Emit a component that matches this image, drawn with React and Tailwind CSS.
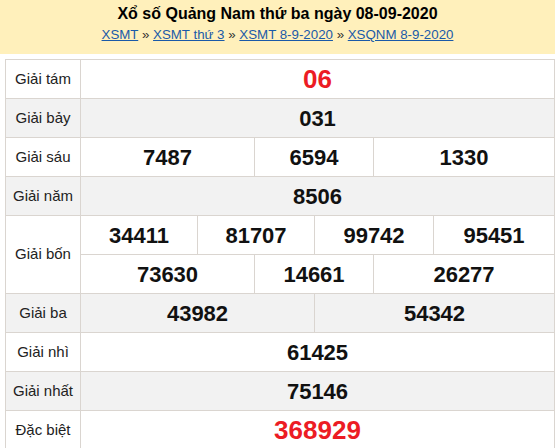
import React from "react";

const B = "border-[#dad5d0]";

function Cell({ w, children, red }) {
  return (
    <div
      className={`h-[39px] border-r border-b ${B} flex items-center justify-center font-bold ${
        red ? "text-[#ec1c24] text-[26px]" : "text-[#111] text-[22px]"
      }`}
      style={{ width: w }}
    >
      {children}
    </div>
  );
}

function Label({ children, h = 39 }) {
  return (
    <div
      className={`w-[75px] shrink-0 border-r border-b ${B} flex items-center justify-center text-[15px] text-[#222]`}
      style={{ height: h }}
    >
      {children}
    </div>
  );
}

function Row({ label, bg, cells }) {
  return (
    <div className={`flex ${bg ? "bg-[#f2f2f2]" : "bg-white"}`}>
      <Label>{label}</Label>
      {cells.map((c, i) => (
        <Cell key={i} w={c[1]} red={c[2]}>
          {c[0]}
        </Cell>
      ))}
    </div>
  );
}

export default function App() {
  return (
    <div
      className="w-[555px] h-[448px] overflow-hidden bg-white"
      style={{ fontFamily: '"Liberation Sans", Arial, sans-serif' }}
    >
      <div className="bg-[#fff0bb] h-[54px] text-center pt-[4px]">
        <div className="text-[16px] font-bold leading-[20px] text-black">
          Xổ số Quảng Nam thứ ba ngày 08-09-2020
        </div>
        <div className="text-[13.3px] leading-[18px] mt-[2px] text-[#333]">
          <a className="text-[#1a5aa8] underline" href="#">XSMT</a>
          {" » "}
          <a className="text-[#1a5aa8] underline" href="#">XSMT thứ 3</a>
          {" » "}
          <a className="text-[#1a5aa8] underline" href="#">XSMT 8-9-2020</a>
          {" » "}
          <a className="text-[#1a5aa8] underline" href="#">XSQNM 8-9-2020</a>
        </div>
      </div>
      <div className={`ml-[5px] mt-[5px] w-[550px] border-l border-t ${B}`}>
        <Row label="Giải tám" cells={[["06", 474, true]]} />
        <Row label="Giải bảy" bg cells={[["031", 474]]} />
        <Row
          label="Giải sáu"
          cells={[
            ["7487", 174],
            ["6594", 119],
            ["1330", 181],
          ]}
        />
        <Row label="Giải năm" bg cells={[["8506", 474]]} />
        <div className="flex bg-white">
          <Label h={78}>Giải bốn</Label>
          <div className="flex flex-col">
            <div className="flex">
              <Cell w={117}>34411</Cell>
              <Cell w={117}>81707</Cell>
              <Cell w={119}>99742</Cell>
              <Cell w={121}>95451</Cell>
            </div>
            <div className="flex">
              <Cell w={174}>73630</Cell>
              <Cell w={119}>14661</Cell>
              <Cell w={181}>26277</Cell>
            </div>
          </div>
        </div>
        <Row
          label="Giải ba"
          bg
          cells={[
            ["43982", 234],
            ["54342", 240],
          ]}
        />
        <Row label="Giải nhì" cells={[["61425", 474]]} />
        <Row label="Giải nhất" bg cells={[["75146", 474]]} />
        <Row label="Đặc biệt" cells={[["368929", 474, true]]} />
      </div>
    </div>
  );
}
